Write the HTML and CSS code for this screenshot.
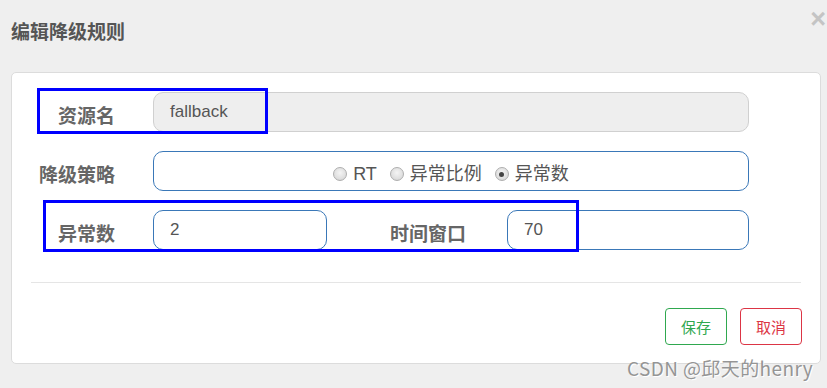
FILE: index.html
```html
<!DOCTYPE html>
<html lang="zh">
<head>
<meta charset="utf-8">
<title>编辑降级规则</title>
<link rel="stylesheet" href="styles.css">
</head>
<body>
<div class="dialog">
  <div class="dialog-head">
    <h3 class="dialog-title">编辑降级规则</h3>
    <span class="close">&times;</span>
  </div>
  <div class="card">
    <div class="form-row">
      <label class="label">资源名</label>
      <div class="input disabled">fallback</div>
    </div>
    <div class="form-row">
      <label class="label">降级策略</label>
      <div class="input radios">
        <span class="radio-item"><span class="radio"></span>RT</span>
        <span class="radio-item"><span class="radio"></span>异常比例</span>
        <span class="radio-item"><span class="radio checked"></span>异常数</span>
      </div>
    </div>
    <div class="form-row split">
      <label class="label">异常数</label>
      <div class="input">2</div>
      <label class="label">时间窗口</label>
      <div class="input">70</div>
    </div>
    <hr class="divider">
    <div class="actions">
      <button class="btn btn-save">保存</button>
      <button class="btn btn-cancel">取消</button>
    </div>
    <span class="mark mark-1"></span>
    <span class="mark mark-2"></span>
  </div>
  <div class="watermark">CSDN @邱天的henry</div>
</div>
</body>
</html>
```
FILE: styles.css
```css
* { box-sizing: border-box; }
html, body { margin: 0; padding: 0; }
body {
  width: 827px;
  height: 388px;
  background: #efefef;
  font-family: "Liberation Sans", Arial, "Noto Sans CJK SC", sans-serif;
  color: #555;
  overflow: hidden;
}
.dialog { position: relative; height: 388px; }
.dialog-head {
  height: 72px;
  padding: 22px 0 0 11px;
}
.dialog-title {
  margin: 0;
  font-size: 19px;
  line-height: 22px;
  font-weight: bold;
  color: #555;
}
.close {
  position: absolute;
  right: 1px;
  top: 6px;
  font-size: 27px;
  line-height: 26px;
  font-weight: bold;
  color: #c4c4c4;
}
.card {
  position: relative;
  margin: 0 6px 0 11px;
  height: 292px;
  background: #fff;
  border: 1px solid #dcdcdc;
  border-radius: 5px;
  padding: 19px 0 0 0;
}
.form-row {
  display: grid;
  grid-template-columns: 103px 596px;
  column-gap: 38px;
  align-items: center;
  height: 40px;
  margin-bottom: 19px;
}
.form-row.split {
  grid-template-columns: 103px 174px 104px 242px;
  column-gap: 38px;
}
.form-row.split .label + .input + .label { margin-right: 3px; }
.label {
  text-align: right;
  font-size: 19px;
  font-weight: bold;
  color: #666;
  padding-top: 5px;
}
.input {
  height: 40px;
  border: 1px solid #3a78b8;
  border-radius: 10px;
  padding: 0 16px;
  font-size: 17px;
  line-height: 37px;
  color: #555;
}
.input.disabled {
  background: #eeeeee;
  border-color: #d0d0d0;
}
.radios {
  display: flex;
  justify-content: center;
  align-items: center;
  gap: 13px;
  padding-top: 6px;
  font-size: 18px;
}
.radio-item {
  display: flex;
  align-items: center;
  gap: 6px;
  color: #555;
}
.radio {
  display: inline-block;
  width: 14px;
  height: 14px;
  border-radius: 50%;
  border: 1px solid #aeaeae;
  background: radial-gradient(circle at 50% 40%, #f4f4f4 0%, #dedede 65%, #cacaca 100%);
  position: relative;
}
.radio.checked::after {
  content: "";
  position: absolute;
  left: 3.5px;
  top: 3.5px;
  width: 5px;
  height: 5px;
  border-radius: 50%;
  background: #444;
}
.divider {
  margin: 32px 19px 0 19px;
  border: 0;
  border-top: 1px solid #e5e5e5;
  height: 0;
}
.actions {
  display: flex;
  justify-content: flex-end;
  gap: 13px;
  padding: 25px 18px 0 0;
}
.btn {
  height: 37px;
  width: 62px;
  background: #fff;
  border-radius: 4px;
  font-family: "Noto Sans CJK SC", sans-serif;
  font-size: 15px;
  padding: 0;
  cursor: pointer;
}
.btn-save { border: 1px solid #2fa84f; color: #2fa84f; }
.btn-cancel { border: 1px solid #dc3545; color: #dc3545; }
.mark {
  position: absolute;
  border: 3px solid #0000ff;
  pointer-events: none;
}
.mark-1 { left: 25px; top: 15px; width: 231px; height: 46px; }
.mark-2 { left: 31px; top: 127px; width: 536px; height: 52px; }
.watermark {
  position: absolute;
  left: 627px;
  top: 356px;
  font-family: "Noto Sans CJK SC", sans-serif;
  font-size: 19px;
  line-height: 24px;
  letter-spacing: 0.4px;
  color: #959595;
  text-shadow: 1px 1px 0 #fff;
}
```
